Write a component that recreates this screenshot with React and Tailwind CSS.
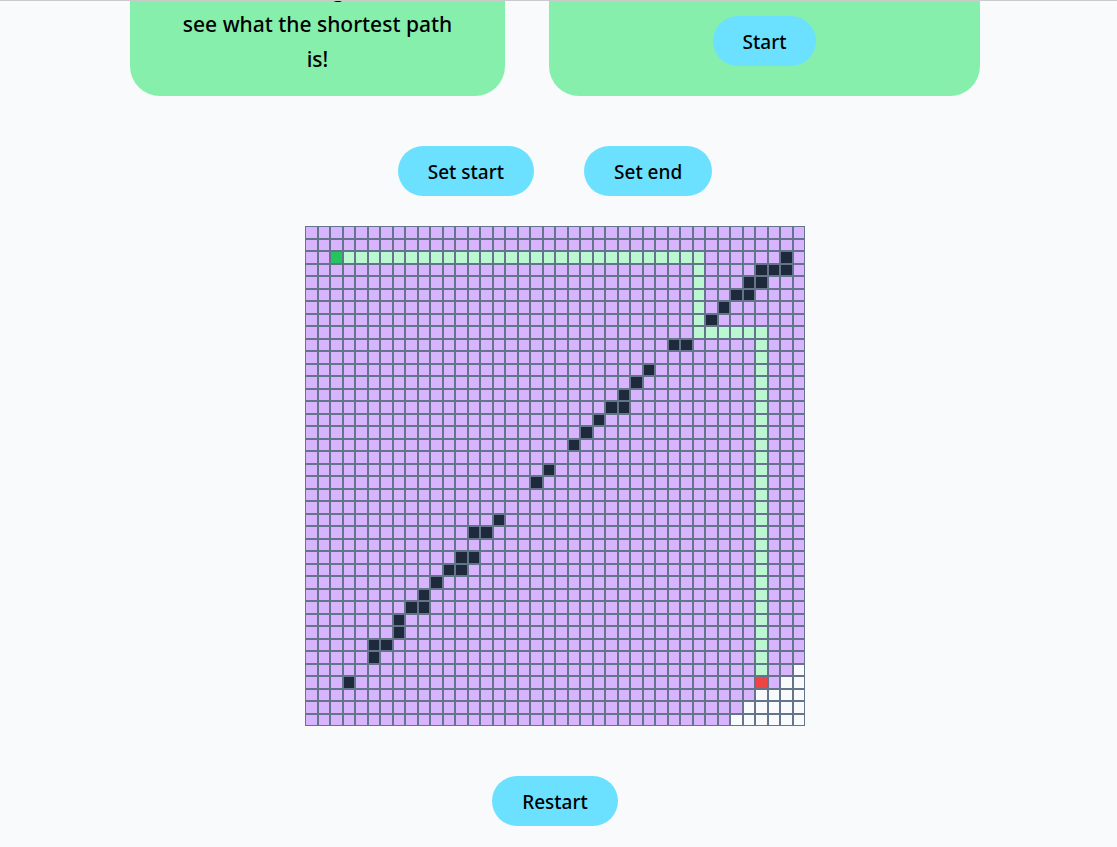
import { useState } from "react";

const SIZE = 40;

const INITIAL_START = [2, 2];
const INITIAL_END = [36, 36];

// Wall columns for each row.
const WALLS = {
  2: [38],
  3: [36, 37, 38],
  4: [35, 36],
  5: [34, 35],
  6: [33],
  7: [32],
  9: [29, 30],
  11: [27],
  12: [26],
  13: [25],
  14: [24, 25],
  15: [23],
  16: [22],
  17: [21],
  19: [19],
  20: [18],
  23: [15],
  24: [13, 14],
  26: [12, 13],
  27: [11, 12],
  28: [10],
  29: [9],
  30: [8, 9],
  31: [7],
  32: [7],
  33: [5, 6],
  34: [5],
  36: [3],
};

// First column of each row that the search did not reach.
const UNVISITED_FROM = { 35: 39, 36: 38, 37: 36, 38: 35, 39: 34 };

const COLORS = {
  start: "bg-[#22c55e]",
  end: "bg-[#ef4444]",
  wall: "bg-[#1e293b]",
  path: "bg-[#bbf7d0]",
  visited: "bg-[#d8b4fe]",
  empty: "bg-transparent",
};

function isPath(row, col) {
  return (
    (row === 2 && col >= 2 && col <= 31) ||
    (col === 31 && row >= 2 && row <= 8) ||
    (row === 8 && col >= 31 && col <= 36) ||
    (col === 36 && row >= 8 && row <= 36)
  );
}

function cellKind(row, col, start, end, cleared) {
  if (row === start[0] && col === start[1]) return "start";
  if (row === end[0] && col === end[1]) return "end";
  if (cleared) return "empty";
  if (WALLS[row]?.includes(col)) return "wall";
  if (isPath(row, col)) return "path";
  if (col >= (UNVISITED_FROM[row] ?? SIZE)) return "empty";
  return "visited";
}

function PillButton({ children, onClick }) {
  return (
    <button
      type="button"
      onClick={onClick}
      className="cursor-pointer rounded-full bg-[#6be0ff] px-[30px] pt-[11px] pb-[9px] text-[19px] leading-[30px] font-medium text-black"
    >
      {children}
    </button>
  );
}

function Board({ start, end, cleared, onPick }) {
  return (
    <div className="grid aspect-square w-full max-w-[500px] grid-cols-[repeat(40,minmax(0,1fr))] grid-rows-[repeat(40,minmax(0,1fr))]">
      {Array.from({ length: SIZE * SIZE }, (_, i) => {
        const row = Math.floor(i / SIZE);
        const col = i % SIZE;
        const kind = cellKind(row, col, start, end, cleared);
        return (
          <div
            key={i}
            onClick={() => onPick([row, col])}
            className={`border border-[#64748b] ${COLORS[kind]}`}
          />
        );
      })}
    </div>
  );
}

export default function App() {
  const [start, setStart] = useState(INITIAL_START);
  const [end, setEnd] = useState(INITIAL_END);
  const [mode, setMode] = useState(null);
  const [cleared, setCleared] = useState(false);

  const pick = (cell) => {
    if (mode === "start") setStart(cell);
    if (mode === "end") setEnd(cell);
    setMode(null);
  };

  return (
    <div className="min-h-screen border-t border-[#c8cacc] bg-[#f8fafc] pr-[7px] pb-5 font-['Noto_Sans','Open_Sans',sans-serif] text-black">
      <main className="flex flex-col items-center">
        <section className="grid w-full max-w-[850px] grid-cols-[375fr_431fr] gap-11">
          <div className="flex h-[95px] flex-col justify-end overflow-hidden rounded-b-[30px] bg-[#86efac] px-12 pb-[19px] text-center text-[21px] leading-[35px] font-medium">
            <p>
              using
              <br />
              see what the shortest path is!
            </p>
          </div>
          <div className="flex flex-col items-center justify-end rounded-b-[30px] bg-[#86efac] pb-[30px]">
            <PillButton onClick={() => setCleared(false)}>Start</PillButton>
          </div>
        </section>

        <div className="mt-[50px] flex gap-[50px]">
          <PillButton onClick={() => setMode("start")}>Set start</PillButton>
          <PillButton onClick={() => setMode("end")}>Set end</PillButton>
        </div>

        <div className="mt-[30px] mb-[50px] flex w-full justify-center">
          <Board start={start} end={end} cleared={cleared} onPick={pick} />
        </div>

        <PillButton onClick={() => setCleared(true)}>Restart</PillButton>
      </main>
    </div>
  );
}
